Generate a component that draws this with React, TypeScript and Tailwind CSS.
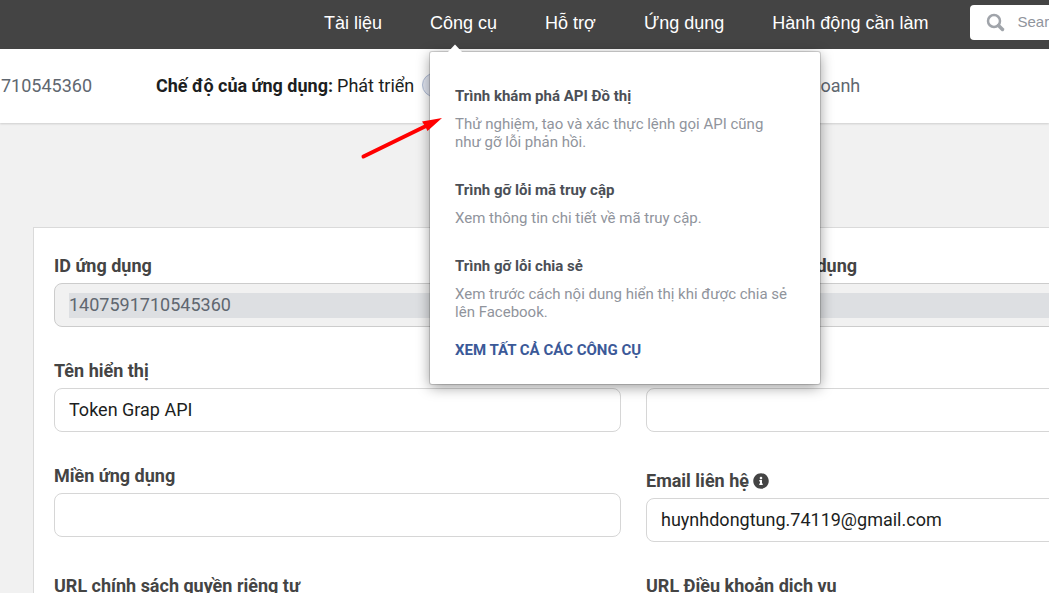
import { FaInfoCircle } from 'react-icons/fa'

const tools = [
  { title: 'Trình khám phá API Đồ thị', text: 'Thử nghiệm, tạo và xác thực lệnh gọi API cũng như gỡ lỗi phản hồi.' },
  { title: 'Trình gỡ lỗi mã truy cập', text: 'Xem thông tin chi tiết về mã truy cập.' },
  { title: 'Trình gỡ lỗi chia sẻ', text: 'Xem trước cách nội dung hiển thị khi được chia sẻ lên Facebook.' },
]

const fields = [
  { id: 'app-id', label: 'ID ứng dụng', value: '1407591710545360', locked: true },
  { id: 'app-secret', label: 'Khóa bí mật của ứng dụng', value: '', locked: true },
  { id: 'display-name', label: 'Tên hiển thị', value: 'Token Grap API' },
  { id: 'namespace', label: 'Không gian tên', value: '' },
  { id: 'domains', label: 'Miền ứng dụng', value: '' },
  { id: 'email', label: 'Email liên hệ', value: 'huynhdongtung.74119@gmail.com', info: true },
  { id: 'privacy-url', label: 'URL chính sách quyền riêng tư', value: '' },
  { id: 'terms-url', label: 'URL Điều khoản dịch vụ', value: '' },
]

function ToolsMenu() {
  return (
    <div className="absolute left-0 top-[53px] z-20 w-[390px] rounded-xs bg-white pb-6 pl-[25px] pr-7 pt-[34px] shadow-[0_0_0_1px_rgba(0,0,0,0.15),0_3px_14px_rgba(0,0,0,0.4)]">
      <svg className="absolute -top-2 left-[17px]" width="16" height="9" viewBox="0 0 16 9">
        <path d="M0 9 L8 0.5 L16 9 Z" fill="#fff" />
      </svg>
      <ul className="flex flex-col gap-[29px] text-[15px]">
        {tools.map((tool) => (
          <li key={tool.title}>
            <a href="#" className="flex flex-col gap-[9px]">
              <span className="font-bold leading-5 text-[#4b4f56]">{tool.title}</span>
              <span className="leading-[18px] text-[#90949c]">{tool.text}</span>
            </a>
          </li>
        ))}
      </ul>
      <a href="#" className="mt-[19px] block text-[15px] font-bold uppercase leading-5 text-[#3b5998]">
        Xem tất cả các công cụ
      </a>
    </div>
  )
}

function Field({ field }: { field: (typeof fields)[number] }) {
  return (
    <div className={field.info ? 'pt-[5px]' : ''}>
      <label htmlFor={field.id} className="mb-[5px] flex items-center gap-1 text-[18px] font-bold leading-6 text-[#444]">
        {field.label}
        {field.info && <FaInfoCircle className="size-4" />}
      </label>
      {field.locked ? (
        <div className="flex h-11 items-center rounded-lg border border-[#ccc] bg-[#f1f1f1] px-3.5">
          <input id={field.id} disabled defaultValue={field.value} className="h-[25px] w-full bg-[#dddfe2] pb-0.5 text-[18px] text-[#606770]" />
        </div>
      ) : (
        <input id={field.id} defaultValue={field.value} className="h-11 w-full rounded-lg border border-[#d6d6d6] bg-white px-3.5 pb-0.5 text-[18px] text-[#1c1e21]" />
      )}
    </div>
  )
}

export default function App() {
  return (
    <div className="relative h-screen w-full overflow-hidden bg-[#f1f1f1] font-['Roboto',sans-serif]">
      {/* top navigation */}
      <header className="flex h-[49px] items-center bg-[#444] pb-0.5 pl-[324px]">
        <nav className="flex shrink-0 items-center gap-12 whitespace-nowrap font-['Liberation_Sans',sans-serif] text-[18px] text-white">
          <a href="#">Tài liệu</a>
          <div className="relative flex h-[49px] items-center">
            <button aria-expanded="true">Công cụ</button>
            <div className="whitespace-normal font-['Roboto',sans-serif]">
              <ToolsMenu />
            </div>
          </div>
          <a href="#">Hỗ trợ</a>
          <a href="#">Ứng dụng</a>
          <a href="#">Hành động cần làm</a>
        </nav>
        <label className="-mt-0.5 ml-[42px] flex h-[35px] shrink-0 items-center gap-3 rounded-sm bg-white pl-4">
          <svg width="19" height="19" viewBox="0 0 19 19" fill="none" stroke="#a0a4aa">
            <circle cx="8" cy="8" r="6" strokeWidth="2.5" />
            <path d="M12.5 12.5 L16.5 16.5" strokeWidth="3.5" strokeLinecap="round" />
          </svg>
          <input type="search" placeholder="Search" aria-label="Search" className="w-[240px] font-['Liberation_Sans',sans-serif] text-[15px] placeholder:text-[#90949c]" />
        </label>
      </header>

      {/* app status bar */}
      <div className="flex h-[74px] items-center whitespace-nowrap bg-white pb-0.5 text-[18px] text-[#1c1e21] shadow-[0_1px_2px_rgba(0,0,0,0.15)]">
        <div className="flex w-[92px] shrink-0 justify-end overflow-hidden text-[#606770]">1407591710545360</div>
        <label className="ml-16 flex items-center gap-1">
          <b>Chế độ của ứng dụng:</b> Phát triển
          <input type="checkbox" role="switch" className="ml-1 h-6 w-12 appearance-none rounded-full border border-[#b0bcd5] bg-[#dfe3ee]" />
        </label>
        <p className="w-[390px] text-right text-[#606770]">
          Loại ứng dụng: Kinh doanh
        </p>
      </div>

      {/* basic settings */}
      <main className="ml-[33px] mr-[-185px] mt-[104px] grid grid-cols-2 gap-x-[25px] gap-y-8 border border-[#dadada] bg-white px-5 pb-8 pt-[26px]">
        {fields.map((field) => (
          <Field key={field.id} field={field} />
        ))}
      </main>

      {/* pointer to the first tool */}
      <svg className="pointer-events-none absolute left-[360px] top-[115px] z-30" width="84" height="46" viewBox="0 0 84 46">
        <path d="M3.5 41.5 L66 11" stroke="#f00" strokeWidth="4" strokeLinecap="round" />
        <path d="M82 3 L62 6.5 L65 11 L67.5 16 Z" fill="#f00" />
      </svg>
    </div>
  )
}
